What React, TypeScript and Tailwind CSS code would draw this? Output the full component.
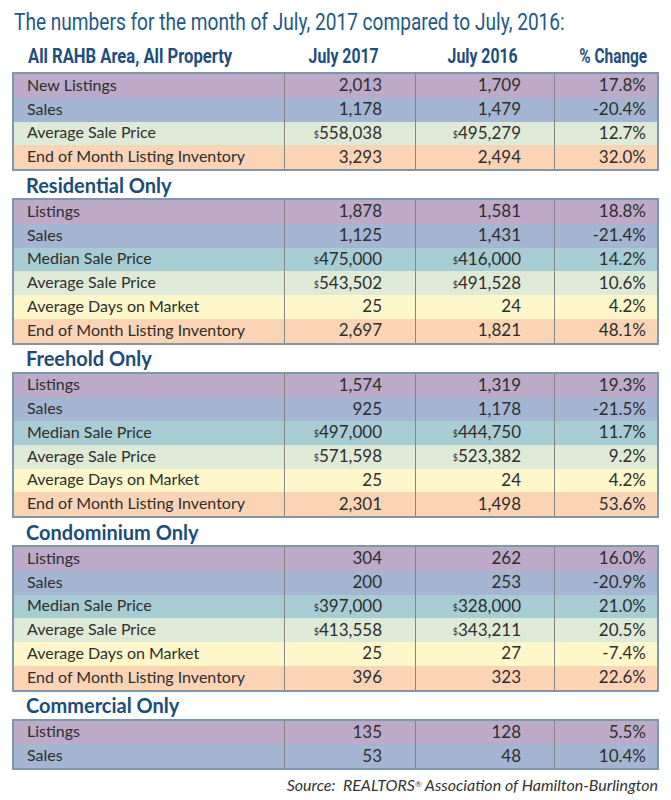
import React from "react";

type Row = { label: string; a: string; b: string; c: string; bg: string; money?: boolean };

const purple = "bg-[#bcaac8]";
const blue = "bg-[#a3b5d0]";
const teal = "bg-[#a7cdd2]";
const green = "bg-[#dfead6]";
const yellow = "bg-[#fdf7c9]";
const orange = "bg-[#fbd4b6]";

const sections: { title: string; rows: Row[] }[] = [
	{
		title: "",
		rows: [
			{ label: "New Listings", a: "2,013", b: "1,709", c: "17.8%", bg: purple },
			{ label: "Sales", a: "1,178", b: "1,479", c: "-20.4%", bg: blue },
			{ label: "Average Sale Price", a: "558,038", b: "495,279", c: "12.7%", bg: green, money: true },
			{ label: "End of Month Listing Inventory", a: "3,293", b: "2,494", c: "32.0%", bg: orange },
		],
	},
	{
		title: "Residential Only",
		rows: [
			{ label: "Listings", a: "1,878", b: "1,581", c: "18.8%", bg: purple },
			{ label: "Sales", a: "1,125", b: "1,431", c: "-21.4%", bg: blue },
			{ label: "Median Sale Price", a: "475,000", b: "416,000", c: "14.2%", bg: teal, money: true },
			{ label: "Average Sale Price", a: "543,502", b: "491,528", c: "10.6%", bg: green, money: true },
			{ label: "Average Days on Market", a: "25", b: "24", c: "4.2%", bg: yellow },
			{ label: "End of Month Listing Inventory", a: "2,697", b: "1,821", c: "48.1%", bg: orange },
		],
	},
	{
		title: "Freehold Only",
		rows: [
			{ label: "Listings", a: "1,574", b: "1,319", c: "19.3%", bg: purple },
			{ label: "Sales", a: "925", b: "1,178", c: "-21.5%", bg: blue },
			{ label: "Median Sale Price", a: "497,000", b: "444,750", c: "11.7%", bg: teal, money: true },
			{ label: "Average Sale Price", a: "571,598", b: "523,382", c: "9.2%", bg: green, money: true },
			{ label: "Average Days on Market", a: "25", b: "24", c: "4.2%", bg: yellow },
			{ label: "End of Month Listing Inventory", a: "2,301", b: "1,498", c: "53.6%", bg: orange },
		],
	},
	{
		title: "Condominium Only",
		rows: [
			{ label: "Listings", a: "304", b: "262", c: "16.0%", bg: purple },
			{ label: "Sales", a: "200", b: "253", c: "-20.9%", bg: blue },
			{ label: "Median Sale Price", a: "397,000", b: "328,000", c: "21.0%", bg: teal, money: true },
			{ label: "Average Sale Price", a: "413,558", b: "343,211", c: "20.5%", bg: green, money: true },
			{ label: "Average Days on Market", a: "25", b: "27", c: "-7.4%", bg: yellow },
			{ label: "End of Month Listing Inventory", a: "396", b: "323", c: "22.6%", bg: orange },
		],
	},
	{
		title: "Commercial Only",
		rows: [
			{ label: "Listings", a: "135", b: "128", c: "5.5%", bg: purple },
			{ label: "Sales", a: "53", b: "48", c: "10.4%", bg: blue },
		],
	},
];

const cols = "grid grid-cols-[270px_131px_139px_1fr]";

function Value({ v, money }: { v: string; money?: boolean }) {
	return (
		<span>
			{money && <sup className="text-[9px] relative -top-[1px]">$</sup>}
			{v}
		</span>
	);
}

function Table({ rows }: { rows: Row[] }) {
	return (
		<div className="border-2 border-[#7f97ad]">
			{rows.map((r) => (
				<div key={r.label} className={`${cols} h-[23.75px] ${r.bg} text-[16px] leading-none text-[#2e2e2e] font-['Lato',sans-serif]`}>
					<div className="flex items-center pl-[13px] pb-[2px]">{r.label}</div>
					<div className="flex items-center justify-end pr-[33px] pb-[2px] border-l border-[#858585] text-[17px]">
						<Value v={r.a} money={r.money} />
					</div>
					<div className="flex items-center justify-end pr-[33px] pb-[2px] border-l border-[#858585] text-[17px]">
						<Value v={r.b} money={r.money} />
					</div>
					<div className="flex items-center justify-end pr-[11px] pb-[2px] border-l border-[#858585] text-[17px]">{r.c}</div>
				</div>
			))}
		</div>
	);
}

export default function App() {
	return (
		<main className="w-[671px] bg-white px-3 pt-[9px] pb-3 font-['Roboto',sans-serif]">
			<h1 className="h-[28px] pl-[2px] text-[23px] leading-[28px] text-[#245987] whitespace-nowrap">
				<span className="inline-block origin-left scale-x-[0.83]">
					The numbers for the month of July, 2017 compared to July, 2016:
				</span>
			</h1>
			<div className={`${cols} h-[35px] items-center pt-[3px] text-[20px] font-bold text-[#1d4e7c] whitespace-nowrap`}>
				<div className="pl-[16px]">
					<span className="inline-block origin-left scale-x-[0.83]">All RAHB Area, All Property</span>
				</div>
				<div className="text-right pr-[34px]">
					<span className="inline-block origin-right scale-x-[0.79]">July 2017</span>
				</div>
				<div className="text-right pr-[34px]">
					<span className="inline-block origin-right scale-x-[0.79]">July 2016</span>
				</div>
				<div className="text-right pr-[12px]">
					<span className="inline-block origin-right scale-x-[0.77]">% Change</span>
				</div>
			</div>
			{sections.map((s, i) => (
				<section key={i}>
					{s.title && (
						<h2 className="h-[27px] flex items-center pl-[14px] text-[20px] font-bold text-[#1b4d78] font-['Lato',sans-serif]">
							{s.title}
						</h2>
					)}
					<Table rows={s.rows} />
				</section>
			))}
			<p className="mt-[5px] text-right pr-[1px] text-[16px] leading-[20px] italic text-[#333] font-['Lato',sans-serif]">
				Source:&nbsp; REALTORS<sup className="text-[8px]">®</sup> Association of Hamilton-Burlington
			</p>
		</main>
	);
}
